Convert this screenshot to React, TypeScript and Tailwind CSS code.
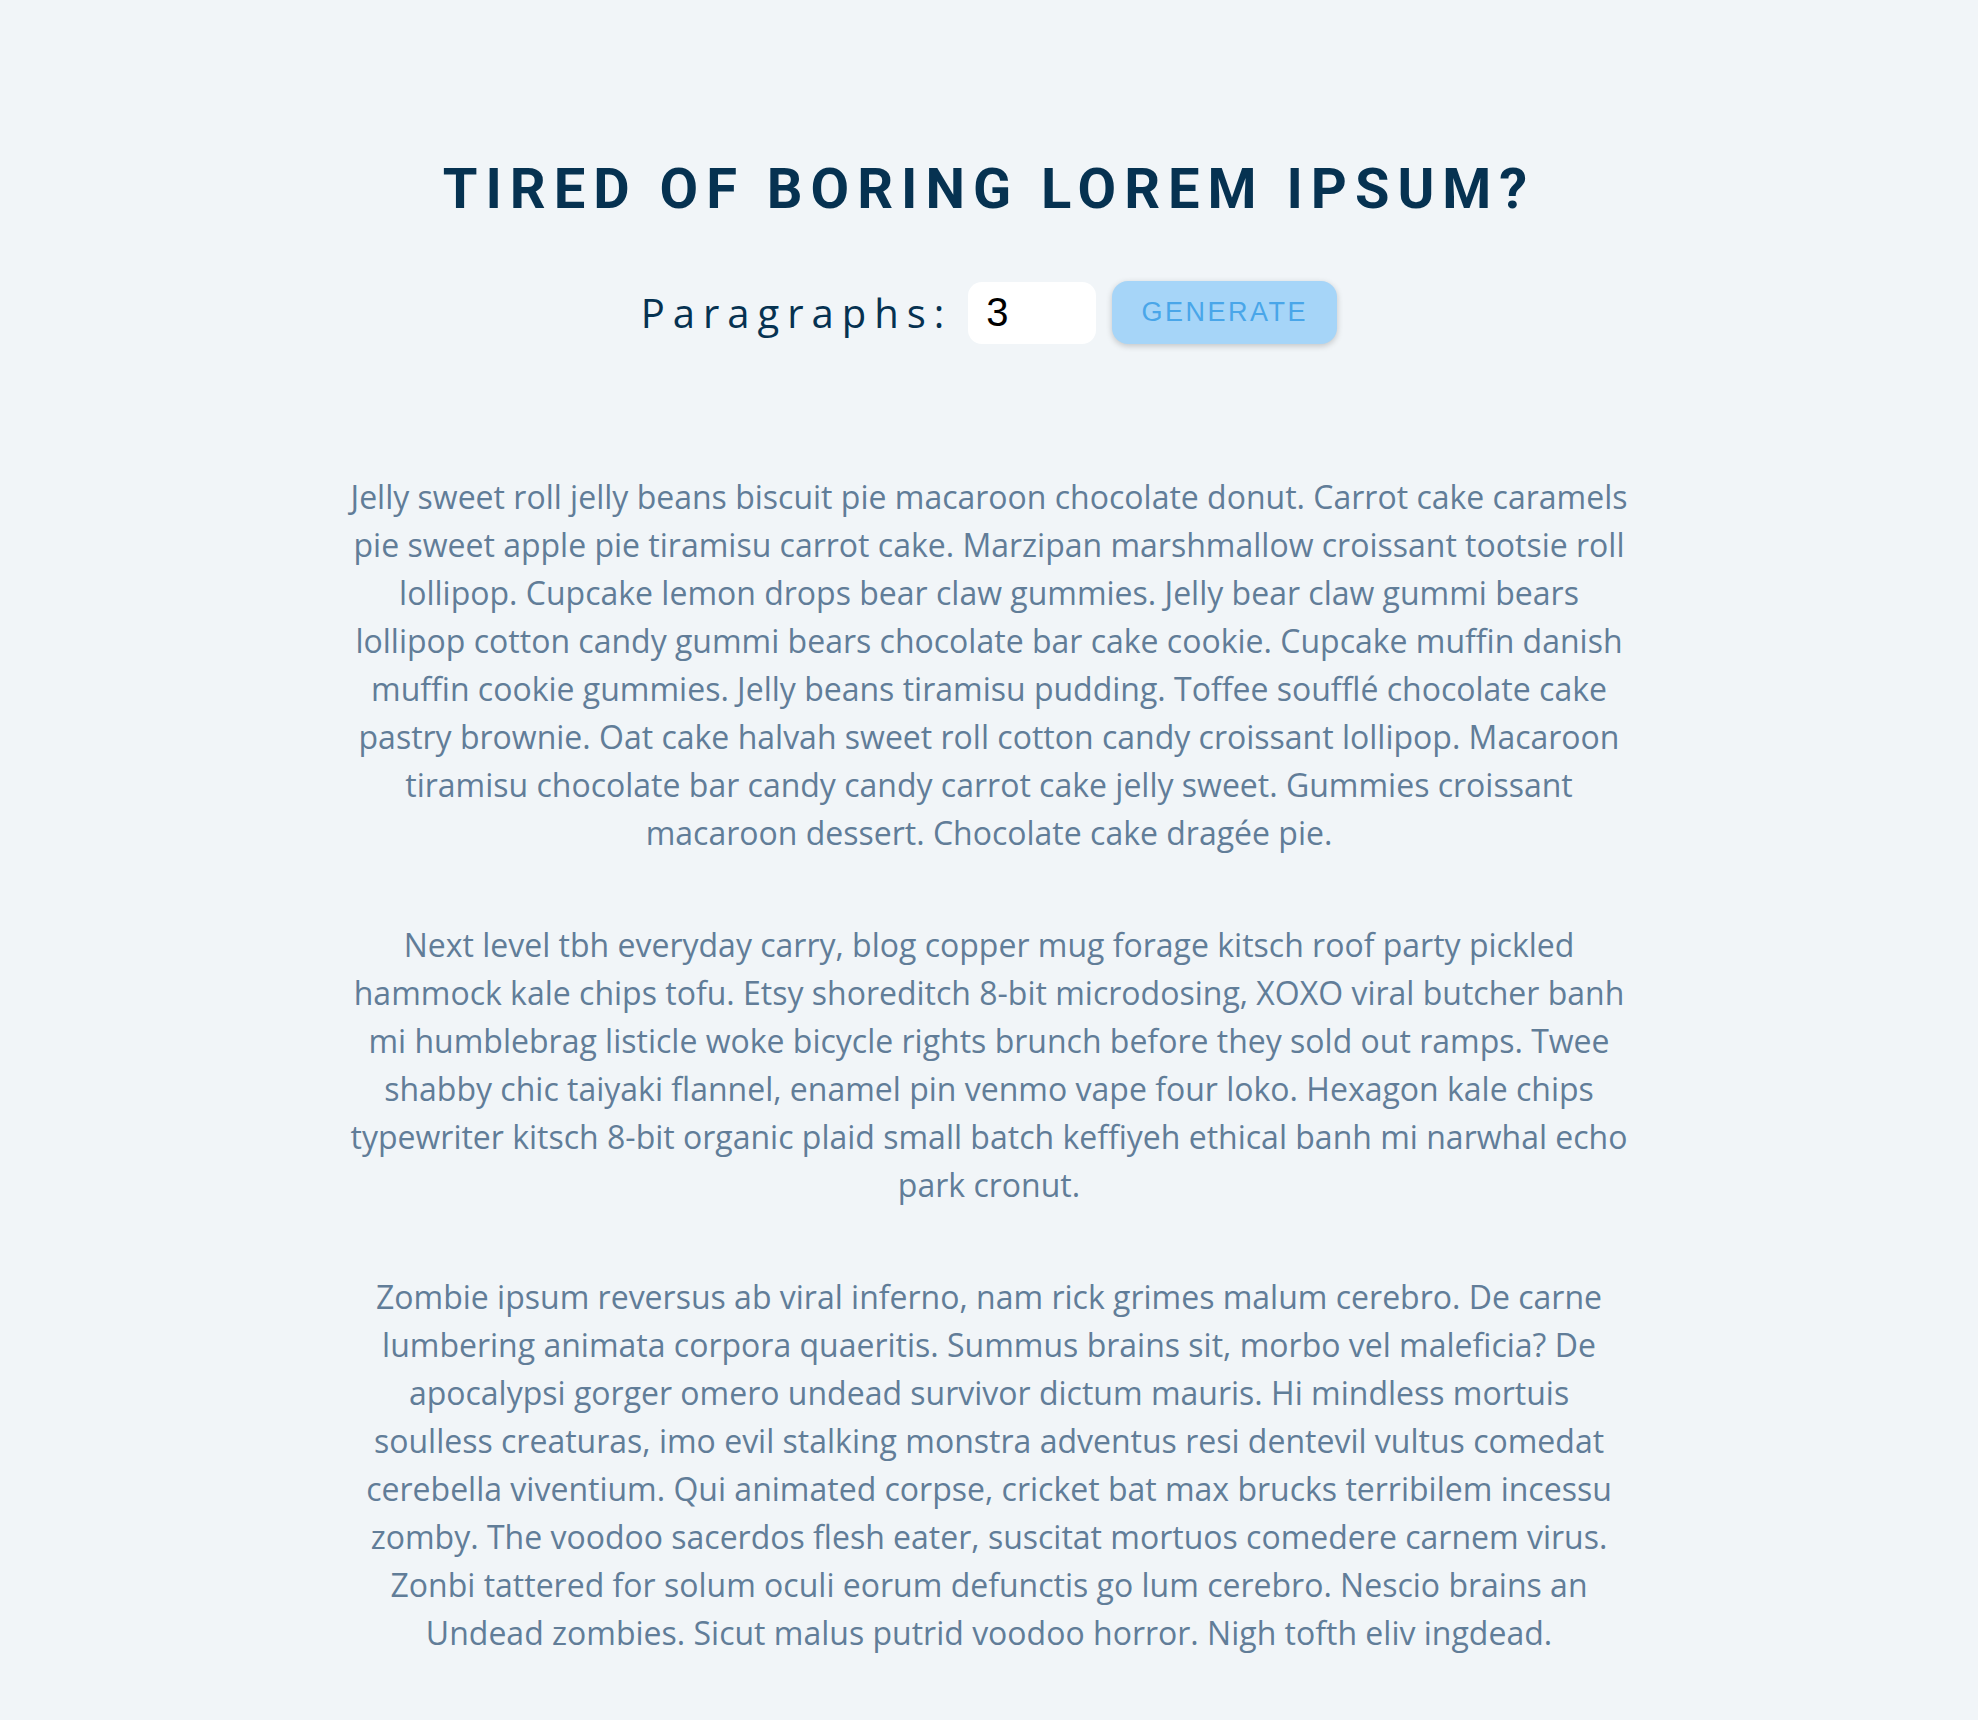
import { useState } from "react";

const paragraphs = [
  "Jelly sweet roll jelly beans biscuit pie macaroon chocolate donut. Carrot cake caramels pie sweet apple pie tiramisu carrot cake. Marzipan marshmallow croissant tootsie roll lollipop. Cupcake lemon drops bear claw gummies. Jelly bear claw gummi bears lollipop cotton candy gummi bears chocolate bar cake cookie. Cupcake muffin danish muffin cookie gummies. Jelly beans tiramisu pudding. Toffee soufflé chocolate cake pastry brownie. Oat cake halvah sweet roll cotton candy croissant lollipop. Macaroon tiramisu chocolate bar candy candy carrot cake jelly sweet. Gummies croissant macaroon dessert. Chocolate cake dragée pie.",
  "Next level tbh everyday carry, blog copper mug forage kitsch roof party pickled hammock kale chips tofu. Etsy shoreditch 8-bit microdosing, XOXO viral butcher banh mi humblebrag listicle woke bicycle rights brunch before they sold out ramps. Twee shabby chic taiyaki flannel, enamel pin venmo vape four loko. Hexagon kale chips typewriter kitsch 8-bit organic plaid small batch keffiyeh ethical banh mi narwhal echo park cronut.",
  "Zombie ipsum reversus ab viral inferno, nam rick grimes malum cerebro. De carne lumbering animata corpora quaeritis. Summus brains sit, morbo vel maleficia? De apocalypsi gorger omero undead survivor dictum mauris. Hi mindless mortuis soulless creaturas, imo evil stalking monstra adventus resi dentevil vultus comedat cerebella viventium. Qui animated corpse, cricket bat max brucks terribilem incessu zomby. The voodoo sacerdos flesh eater, suscitat mortuos comedere carnem virus. Zonbi tattered for solum oculi eorum defunctis go lum cerebro. Nescio brains an Undead zombies. Sicut malus putrid voodoo horror. Nigh tofth eliv ingdead.",
];

export default function App() {
  const [count, setCount] = useState("3");

  return (
    <div className="min-h-screen bg-[#f1f5f8] font-['Open_Sans',sans-serif]">
      <section className="mx-auto w-[1280px] pt-[154px] pb-[40px] text-center">
        {/* titre */}
        <h3 className="font-['Roboto',sans-serif] text-[56px] font-bold uppercase leading-[70px] tracking-[8px] text-[#063251]">
          Tired of boring lorem ipsum?
        </h3>

        <form
          className="mt-[57px] mb-[129px] flex items-center justify-center"
          onSubmit={(e) => e.preventDefault()}
        >
          <label
            htmlFor="amount"
            className="text-[40px] capitalize tracking-[8px] text-[#063251]"
          >
            paragraphs:
          </label>
          <input
            id="amount"
            type="number"
            value={count}
            onChange={(e) => setCount(e.target.value)}
            className="mx-[16px] h-[62px] w-[128px] rounded-[14px] border-none bg-white px-[18px] font-['Liberation_Sans',sans-serif] text-[40px] text-black outline-none"
          />
          <button
            type="submit"
            className="h-[63px] w-[225px] rounded-[16px] bg-[#a6d5f8] font-['Liberation_Sans',sans-serif] text-[27px] uppercase tracking-[2.5px] text-[#49a6e9] shadow-[0_2px_6px_rgba(0,0,0,0.2)]"
          >
            generate
          </button>
        </form>

        <article className="flex flex-col gap-[64px]">
          {paragraphs.map((p, i) => (
            <p key={i} className="text-[32px] leading-[48px] text-[#617d98]">
              {p}
            </p>
          ))}
        </article>
      </section>
    </div>
  );
}
